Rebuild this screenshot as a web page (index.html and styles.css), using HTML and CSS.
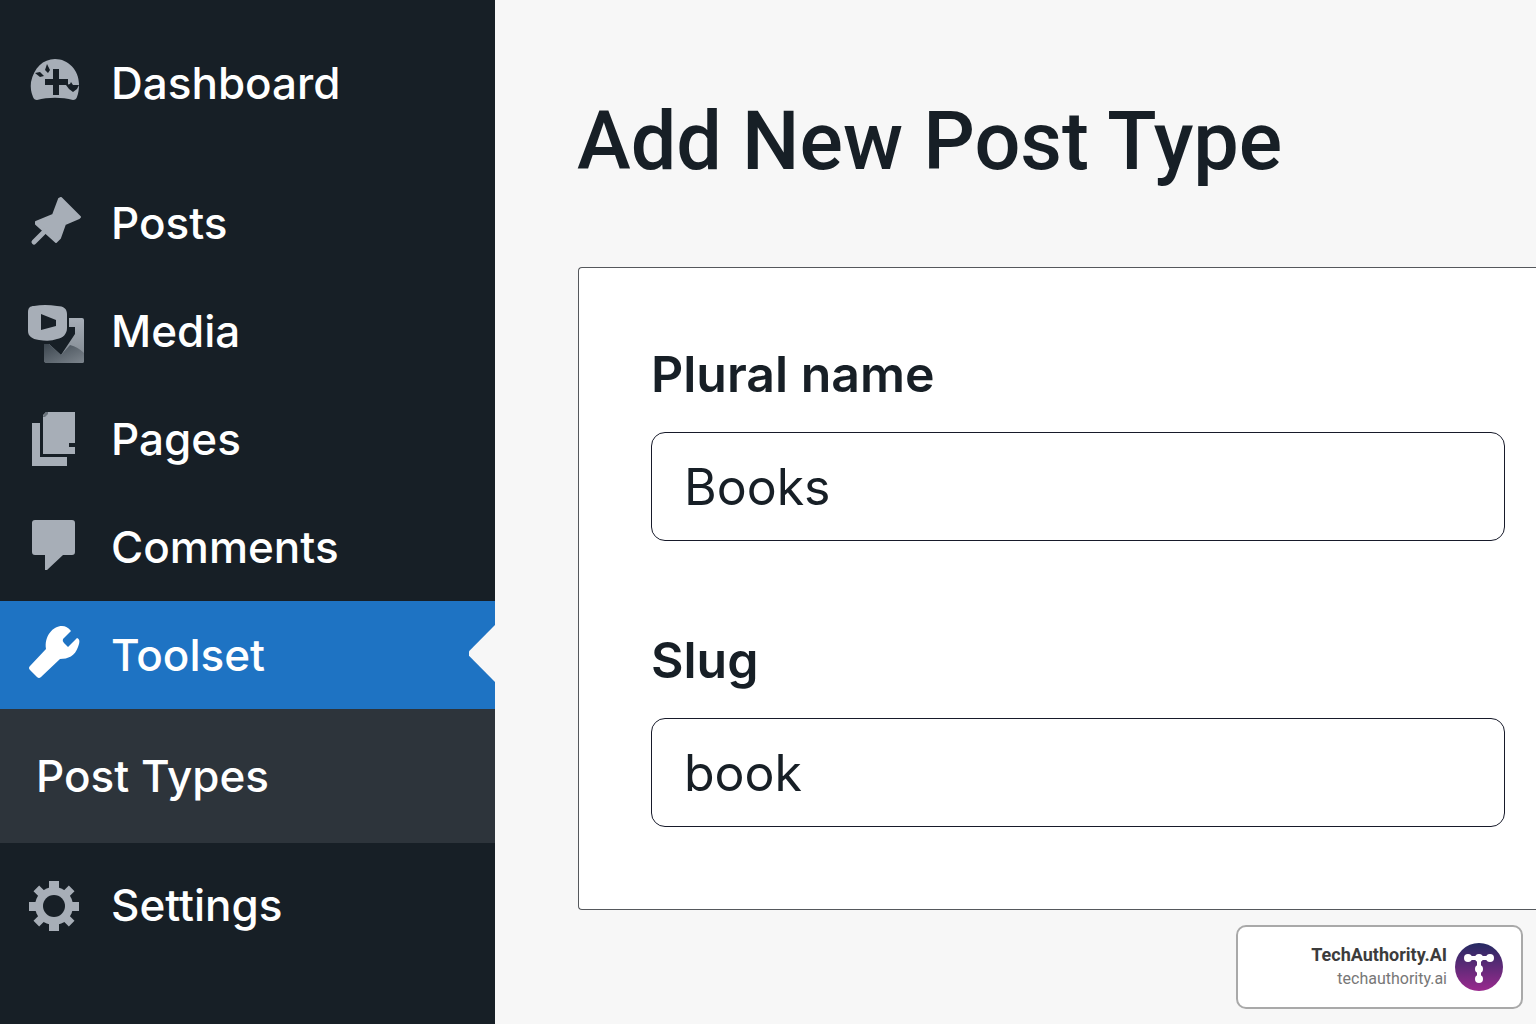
FILE: index.html
```html
<!DOCTYPE html>
<html lang="en">
<head>
<meta charset="utf-8">
<meta name="viewport" content="width=device-width, initial-scale=1">
<title>Add New Post Type</title>
<link rel="stylesheet" href="styles.css">
</head>
<body>
<div class="layout">
  <nav class="sidebar" aria-label="Admin menu">
    <a class="menu-item menu-item-first" href="#dashboard">
      <svg class="menu-icon" viewBox="0 0 60 60" aria-hidden="true">
        <path fill="#a7aeb7" d="M11 47 Q8 47 7 44 Q4 37 5 29 C8 15 17 6 29 6 C42 6 53 17 53 31 Q53 39 51 44 Q50 47 47 47 C36 44 22 44 11 47Z"/>
        <path fill="#171f26" d="M27 16h6v10h9v6h-9v10h-6v-10h-8v-6h8zM21 11l3 6-2 3-3-3zM9 20l5-1 4 4-4 1zM40 32l4-1 1-2 2 3 6 0-2 4-4 3-4-3z"/>
      </svg>
      <span>Dashboard</span>
    </a>
    <a class="menu-item" href="#posts">
      <svg class="menu-icon" viewBox="0 0 60 60" aria-hidden="true">
        <path fill="#a7aeb7" stroke="#a7aeb7" stroke-width="2" stroke-linejoin="round" d="M35 5l19 19-1 1-14 6-5 14-4 4-20-18v-2l17-7 6-16z"/>
        <path fill="none" stroke="#a7aeb7" stroke-width="5" stroke-linecap="round" d="M20 37L8 49"/>
      </svg>
      <span>Posts</span>
    </a>
    <a class="menu-item" href="#media">
      <svg class="menu-icon" viewBox="0 0 60 60" aria-hidden="true">
        <defs>
          <linearGradient id="media-back" x1="0" y1="0" x2="0" y2="1">
            <stop offset="0" stop-color="#a7aeb7"/>
            <stop offset="1" stop-color="#7d858d"/>
          </linearGradient>
          <linearGradient id="media-low" x1="0" y1="0" x2="1" y2="1">
            <stop offset="0" stop-color="#3c464f"/>
            <stop offset="1" stop-color="#7d858d"/>
          </linearGradient>
        </defs>
        <path fill="url(#media-back)" d="M43 17h13q2 0 2 2v41q0 2-2 2H21q-3 0-3-3V43h5l12 11 14-21v-7h-6z"/>
        <path fill="url(#media-low)" d="M18 43h5l12 11 9-10q8 2 14 8v8q0 2-2 2H21q-3 0-3-3z"/>
        <path fill="#a7aeb7" d="M8 5Q19 3 31 5C38 5 41 8 41 13v14c0 6-4 10-10 11q-7 3-18 1C6 38 2 35 2 30V11c0-4 2-6 6-6z"/>
        <path fill="#171f26" d="M15 13l15 6v6l-15 4z"/>
      </svg>
      <span>Media</span>
    </a>
    <a class="menu-item" href="#pages">
      <svg class="menu-icon" viewBox="0 0 60 60" aria-hidden="true">
        <path fill="#a7aeb7" d="M6 14h8v34h27v9H6z"/>
        <path fill="#a7aeb7" d="M20 3h29v31h-6v4h6v7H17V6z"/>
        <path fill="#69727a" d="M17 7l3-4h2v2l-3 3h-2z"/>
      </svg>
      <span>Pages</span>
    </a>
    <a class="menu-item" href="#comments">
      <svg class="menu-icon" viewBox="0 0 60 60" aria-hidden="true">
        <path fill="#a7aeb7" d="M9 3h37q3 0 3 3v29q0 3-3 3h-9L21 53h-2V38H9q-3 0-3-3V6q0-3 3-3z"/>
      </svg>
      <span>Comments</span>
    </a>
    <a class="menu-item menu-item-current" href="#toolset" aria-current="true">
      <svg class="menu-icon" viewBox="0 0 60 60" aria-hidden="true">
        <path fill="#fff" d="M20 24C18 11 27 1 36 1q5 0 9 5l-8 8q-1 2 1 4l4 4 9-9c3 1 3 4 1 9-3 9-10 12-18 12L15 52q-2 2-4 0l-7-7q-2-2 0-4z"/>
      </svg>
      <span>Toolset</span>
    </a>
    <a class="submenu-item" href="#post-types">Post Types</a>
    <a class="menu-item menu-item-last" href="#settings">
      <svg class="menu-icon" viewBox="0 0 60 60" aria-hidden="true">
        <g fill="#a7aeb7" transform="translate(28 31)">
          <path d="M-5-25H5V25H-5zM-25-4H25V5H-25z"/>
          <path d="M-4-25H4V25H-4zM-25-4H25V4H-25z" transform="rotate(45)"/>
          <circle r="19"/>
          <circle r="11" fill="#171f26"/>
        </g>
      </svg>
      <span>Settings</span>
    </a>
  </nav>
  <main class="content">
    <h1 class="title">Add New Post Type</h1>
    <form class="card">
      <div class="field">
        <label class="label" for="plural">Plural name</label>
        <input class="input" id="plural" type="text" value="Books">
      </div>
      <div class="field">
        <label class="label" for="slug">Slug</label>
        <input class="input" id="slug" type="text" value="book">
      </div>
    </form>
  </main>
</div>
<a class="badge" href="#techauthority">
  <span class="badge-text">
    <strong class="badge-name">TechAuthority.AI</strong>
    <span class="badge-domain">techauthority.ai</span>
  </span>
  <svg class="badge-logo" viewBox="0 0 48 48" aria-hidden="true">
    <defs>
      <linearGradient id="logo-fill" x1="0" y1="0" x2="0" y2="1">
        <stop offset="0" stop-color="#252a62"/>
        <stop offset="1" stop-color="#9a2a8e"/>
      </linearGradient>
    </defs>
    <circle cx="24" cy="24" r="24" fill="url(#logo-fill)"/>
    <path fill="none" stroke="#fff" stroke-width="4" d="M13 15h22M24 15v22"/>
    <g fill="#fff">
      <circle cx="13" cy="15" r="4"/><circle cx="35" cy="15" r="4"/>
      <circle cx="24" cy="15" r="4"/><circle cx="24" cy="26" r="4"/>
      <circle cx="24" cy="36" r="4"/>
    </g>
  </svg>
</a>
</body>
</html>
```
FILE: styles.css
```css
* {
  box-sizing: border-box;
}

body {
  margin: 0;
  background: #f7f7f7;
  color: #171f26;
  font-family: Inter, "Liberation Sans", sans-serif;
}

.layout {
  display: flex;
  min-height: 100vh;
}

.sidebar {
  flex: none;
  width: 495px;
  padding-top: 29px;
  background: #171f26;
}

.menu-item {
  position: relative;
  display: flex;
  align-items: center;
  gap: 25px;
  height: 108px;
  padding-left: 26px;
  color: #fff;
  font-size: 44px;
  font-weight: 500;
  text-decoration: none;
}

.menu-icon {
  flex: none;
  width: 60px;
  height: 60px;
  overflow: visible;
}

.menu-item-first {
  margin-bottom: 32px;
}

.menu-item-current {
  background: #1e73c3;
}

.menu-item-current::after {
  content: "";
  position: absolute;
  top: 24px;
  right: 0;
  width: 26px;
  height: 57px;
  background: #f7f7f7;
  clip-path: polygon(100% 0, 100% 100%, 0 54%, 0 46%);
}

.submenu-item {
  display: flex;
  align-items: center;
  height: 134px;
  padding-left: 36px;
  background: #2d343b;
  color: #fff;
  font-size: 44px;
  font-weight: 500;
  text-decoration: none;
}

.menu-item-last {
  margin-top: 8px;
}

.content {
  flex: 1;
  min-width: 0;
  padding: 92px 0 92px 82px;
}

.title {
  margin: 0 0 75px;
  font-family: Roboto, sans-serif;
  font-size: 81px;
  font-weight: 500;
  line-height: 100px;
}

.card {
  display: flex;
  flex-direction: column;
  gap: 87px;
  margin-left: 1px;
  padding: 74px 31px 82px 72px;
  border: 1px solid #55585c;
  border-right: 0;
  border-radius: 4px 0 0 4px;
  background: #fff;
}

.field {
  display: flex;
  flex-direction: column;
  gap: 26px;
}

.label {
  font-size: 50px;
  font-weight: 600;
  line-height: 64px;
}

.input {
  width: 100%;
  height: 109px;
  padding: 0 32px;
  border: 1px solid #171a2a;
  border-radius: 14px;
  background: #fff;
  color: #171f26;
  font-family: inherit;
  font-size: 50px;
}

.badge {
  position: fixed;
  right: 13px;
  bottom: 15px;
  display: flex;
  align-items: center;
  justify-content: flex-end;
  gap: 8px;
  width: 287px;
  height: 84px;
  padding-right: 18px;
  border: 2px solid #a9a9a9;
  border-radius: 10px;
  background: #fff;
  font-family: Roboto, sans-serif;
  text-align: right;
  text-decoration: none;
}

.badge-text {
  display: flex;
  flex-direction: column;
}

.badge-name {
  color: #3c3c3c;
  font-size: 18px;
  font-weight: 700;
  line-height: 24px;
}

.badge-domain {
  color: #777;
  font-size: 16px;
  line-height: 24px;
}

.badge-logo {
  width: 48px;
  height: 48px;
}
```
